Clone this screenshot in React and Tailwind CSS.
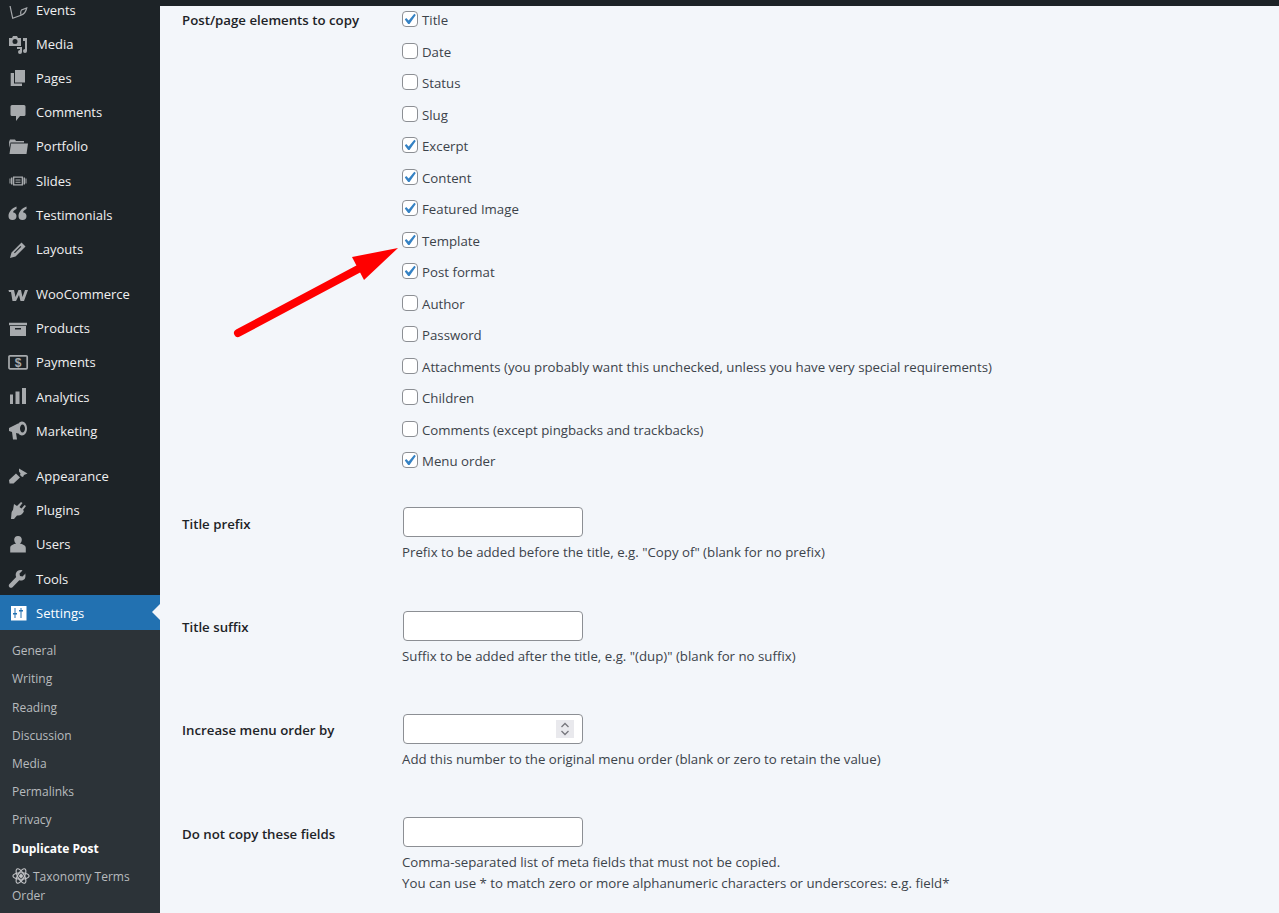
import React from 'react';

const fill = 'currentColor';

const icons = {
  events: (
    <path fill="none" stroke={fill} strokeWidth="1.200" d="M1 1L4.700 18.300L13.700 15C16 14 18 11 18.700 8L13.500 10C12.800 11 12.500 13 13 15" />
  ),
  media: (
    <path fill={fill} fillRule="evenodd" d="M1 3h3l1-2h4l1 2h3v8h-12zM7 4a2.500 2.500 0 1 0 0 5 2.500 2.500 0 0 0 0-5zM15 3h4v13a2 2 0 1 1-2-2v-8h-2zM9 12h5v5a2 2 0 1 1-2-2v-1h-3z" />
  ),
  pages: (
    <path fill={fill} d="M7 1h10v12.500h-10zM2.700 4h3.300v10.500h8v2.500h-11.300z" />
  ),
  comments: (
    <path fill={fill} d="M4 2h12a1.500 1.500 0 0 1 1.500 1.500v8a1.500 1.500 0 0 1-1.500 1.500h-4l-4 5v-5h-4a1.500 1.500 0 0 1-1.500-1.500v-8a1.500 1.500 0 0 1 1.500-1.500z" />
  ),
  portfolio: (
    <path fill={fill} d="M3 6.500h17l-1.500 10.500h-17zM1 5l1-2.500h5l1 1.500h8v1.500h-13.500l-1 5.500z" />
  ),
  slides: (
    <g fill={fill}>
      <path d="M1.500 7.500h1v5h-1zM3 6.500h1.500v7h-1.500zM15.500 6.500h1.500v7h-1.500zM17.500 7.500h1v5h-1z" />
      <path fillRule="evenodd" d="M5 5.500h10v9h-10zM6.300 6.800v6.400h7.400v-6.400zM7.500 8.500h5v1h-5zM7.500 10.800h5v1h-5z" />
    </g>
  ),
  quote: (
    <path fill={fill} d="M8.500 1.500C4 3 .5 7 .5 11a4 4 0 1 0 8 0c0-2-1.500-3.500-3.500-3.800C5.500 5.500 7 4.500 8.500 4zM18.500 1.500C14 3 10.500 7 10.500 11a4 4 0 1 0 8 0c0-2-1.500-3.500-3.500-3.800C15.500 5.500 17 4.500 18.500 4z" />
  ),
  pencil: (
    <path fill={fill} fillRule="evenodd" d="M13.500 2.500l4 4-10 10-5.500 1.500 1.500-5.500zM12.500 6l.8.8-6.500 6.500-.8-.8z" />
  ),
  woo: (
    <path fill={fill} d="M.5 5h5.500l1.500 7 3-7h2.500l1.500 7 2.500-7h3l-4 11h-3.500l-1.500-6-3 6h-3.500l-1.500-9h-2z" />
  ),
  products: (
    <path fill={fill} fillRule="evenodd" d="M1 3.700h18v2.500h-18zM2 7h16v10h-16zM7 9v1.500h6v-1.500z" />
  ),
  payments: (
    <g>
      <rect x="1" y="2.800" width="18.200" height="13" rx="1" fill="none" stroke={fill} strokeWidth="1.700" />
      <text x="10" y="13.500" textAnchor="middle" fontSize="12" fontWeight="700" fontFamily="Liberation Sans, sans-serif" fill={fill}>$</text>
    </g>
  ),
  analytics: (
    <path fill={fill} d="M2 7.500h3v9.500h-3zM7.500 4.500h4v12.500h-4zM14 1h4v16h-4z" />
  ),
  marketing: (
    <g fill={fill}>
      <path d="M1 6L10 1.500V11.500L8 11l1 6.500h-4l-1-7.500-3-1z" />
      <path fillRule="evenodd" d="M14 -.5c2.800 0 5 3.100 5 7s-2.200 7-5 7c-1.600 0-3-1-4-2.500v-9c1-1.500 2.400-2.500 4-2.500zM14.500 2.500c-1.400 0-2.500 1.800-2.500 4s1.100 4 2.500 4 2.500-1.800 2.500-4-1.100-4-2.500-4z" />
    </g>
  ),
  appearance: (
    <path fill={fill} d="M11 1.500l8.500 5-3.500 1.500-1 2-1.500-.5-1.500-1.500.5-1.500-1.500-2zM8 6.500l4 4-6.500 6h-4l-.5-3.500z" />
  ),
  plugins: (
    <path fill={fill} d="M13 1l1.500 1-3 4 2 1.500 3-3.500 1.500 1-3 4 1 1c-1 3-3.500 5-7 4.500l-3 3.500h-3l.5-6c.2-1 .5-2 1.500-3l1-6 3 2z" />
  ),
  users: (
    <path fill={fill} d="M10 1a3.800 3.800 0 0 1 3.800 3.800c0 2-1 3.200-2 3.800 2.500.6 6 1.600 6 4.400v4.500h-15.600v-4.500c0-2.800 3.500-3.800 6-4.400-1-.6-2-1.800-2-3.800a3.800 3.800 0 0 1 3.800-3.800z" />
  ),
  tools: (
    <path fill={fill} d="M17.500 4.500l-3 3-2.500-.5-.5-2.500 3-3c-2.500-1-5.500 0-6.500 2.500-.5 1.500-.3 3 .2 4l-6.700 7c-1 1-1 2.500 0 3.200.8.800 2 .8 3 0l6.800-7c2 .8 4.200.2 5.500-1.500.8-1.500 1-3.500.2-5.700z" />
  ),
};

function Icon({ name }) {
  return (
    <svg viewBox="0 0 20 20" className="h-5 w-5 shrink-0 overflow-visible text-[#a7aaad]">
      {icons[name]}
    </svg>
  );
}

const topMenu = [
  [
    ['events', 'Events'],
    ['media', 'Media'],
    ['pages', 'Pages'],
    ['comments', 'Comments'],
    ['portfolio', 'Portfolio'],
    ['slides', 'Slides'],
    ['quote', 'Testimonials'],
    ['pencil', 'Layouts'],
  ],
  [
    ['woo', 'WooCommerce'],
    ['products', 'Products'],
    ['payments', 'Payments'],
    ['analytics', 'Analytics'],
    ['marketing', 'Marketing'],
  ],
  [
    ['appearance', 'Appearance'],
    ['plugins', 'Plugins'],
    ['users', 'Users'],
    ['tools', 'Tools'],
  ],
];

const subMenu = ['General', 'Writing', 'Reading', 'Discussion', 'Media', 'Permalinks', 'Privacy'];

const elements = [
  ['Title', true],
  ['Date', false],
  ['Status', false],
  ['Slug', false],
  ['Excerpt', true],
  ['Content', true],
  ['Featured Image', true],
  ['Template', true],
  ['Post format', true],
  ['Author', false],
  ['Password', false],
  ['Attachments (you probably want this unchecked, unless you have very special requirements)', false],
  ['Children', false],
  ['Comments (except pingbacks and trackbacks)', false],
  ['Menu order', true],
];

function Sidebar() {
  return (
    <aside className="w-[160px] shrink-0 overflow-hidden bg-[#1d2327] text-[13px] text-[#f0f0f1]">
      <div className="-mt-[14px]">
        {topMenu.map((group, i) => (
          <ul key={i} className="mb-[11px]">
            {group.map(([icon, label]) => (
              <li key={label} className="flex h-[34.200px] items-center gap-[8px] pl-[8px] pt-[2.500px]">
                <Icon name={icon} />
                <span>{label}</span>
              </li>
            ))}
          </ul>
        ))}
      </div>
      <div className="relative -mt-[11px] flex h-[35px] items-center gap-[8px] bg-[#2271b1] pl-[8px] pt-[2px] text-white">
        <svg viewBox="0 0 20 20" className="h-5 w-5 shrink-0">
          <rect x="3" y="2" width="15.500" height="14.500" fill="#fff" />
          <path fill="#2271b1" d="M6.500 4h1v10h-1zM5 9h4v1.400h-4zM12.500 4h1v10h-1zM11 6h4v1.400h-4z" />
        </svg>
        <span>Settings</span>
        <span className="absolute right-0 top-[9px] h-0 w-0 border-y-[8px] border-r-[8px] border-y-transparent border-r-[#f3f6fa]" />
      </div>
      <ul className="bg-[#2c3338] pt-[7px] pb-4 text-[12px] text-[#b8bbbe]">
        {subMenu.map((label) => (
          <li key={label} className="flex h-[28.200px] items-center pl-[12px]">{label}</li>
        ))}
        <li className="flex h-[28.200px] items-center pl-[12px] font-bold text-white">Duplicate Post</li>
        <li className="pl-[12px] pt-[4px] leading-[19px]">
          <svg viewBox="0 0 20 20" className="mr-[3px] inline-block h-[18px] w-[18px] align-[-4px] text-[#c3c4c7]" fill="none" stroke="currentColor" strokeWidth="1.300">
            <ellipse cx="10" cy="10" rx="9" ry="3.600" />
            <ellipse cx="10" cy="10" rx="9" ry="3.600" transform="rotate(60 10 10)" />
            <ellipse cx="10" cy="10" rx="9" ry="3.600" transform="rotate(120 10 10)" />
            <circle cx="10" cy="10" r="1.500" fill="currentColor" />
          </svg>
          Taxonomy Terms Order
        </li>
      </ul>
    </aside>
  );
}

function Checkbox({ checked, label }) {
  return (
    <label className="flex h-4 items-center gap-[4px]">
      <span className="flex h-4 w-4 shrink-0 items-center justify-center rounded-[4px] border border-[#8c8f94] bg-white">
        {checked && (
          <svg viewBox="0 0 14 14" className="h-[14px] w-[14px]">
            <path fill="#3582c4" d="M11.300 1.800l1.500 1.100-6.300 9h-1.300l-3.400-4.500 1.400-1.300 2.500 2.300z" />
          </svg>
        )}
      </span>
      <span className="whitespace-nowrap pt-[4px]">{label}</span>
    </label>
  );
}

function Field({ label, children, description }) {
  return (
    <div className="flex h-[103.300px]">
      <div className="w-[221px] shrink-0 pt-[7.500px] font-semibold text-[#1d2327]">{label}</div>
      <div>
        {children}
        <div className="mt-[5px] -ml-px leading-[21px]">{description}</div>
      </div>
    </div>
  );
}

const inputClass = 'block h-[30px] w-[180px] rounded-[4px] border border-[#8c8f94] bg-white';

export default function App() {
  return (
    <div className="relative flex h-[913px] flex-col overflow-hidden bg-[#f3f6fa] font-['Open_Sans',sans-serif] text-[13.250px] text-[#3c434a]">
      <div className="h-[6px] shrink-0 bg-[#1d2327]" />
      <div className="flex min-h-0 flex-1">
        <Sidebar />
        <main className="flex-1 pl-[22px]">
          <div className="flex pt-[5px]">
            <div className="w-[220px] shrink-0 pt-px font-semibold leading-4 text-[#1d2327]">Post/page elements to copy</div>
            <div className="flex flex-col gap-[15.500px]">
              {elements.map(([label, checked]) => (
                <Checkbox key={label} label={label} checked={checked} />
              ))}
            </div>
          </div>
          <div className="mt-[39.400px]">
            <Field label="Title prefix" description={'Prefix to be added before the title, e.g. "Copy of" (blank for no prefix)'}>
              <input type="text" className={inputClass} />
            </Field>
            <Field label="Title suffix" description={'Suffix to be added after the title, e.g. "(dup)" (blank for no suffix)'}>
              <input type="text" className={inputClass} />
            </Field>
            <Field label="Increase menu order by" description="Add this number to the original menu order (blank or zero to retain the value)">
              <div className="relative">
                <input type="text" className={inputClass} />
                <span className="absolute left-[153px] top-[6px] flex h-[18px] w-[18px] items-center justify-center bg-[#e9e9ed]">
                  <svg viewBox="0 0 18 18" className="h-[18px] w-[18px]" fill="none" stroke="#77777d" strokeWidth="1.300">
                    <path d="M5.500 7l3.500-3.500 3.500 3.500M5.500 11l3.500 3.500 3.500-3.500" />
                  </svg>
                </span>
              </div>
            </Field>
            <Field
              label="Do not copy these fields"
              description={
                <>
                  Comma-separated list of meta fields that must not be copied.
                  <br />
                  You can use * to match zero or more alphanumeric characters or underscores: e.g. field*
                </>
              }
            >
              <input type="text" className={inputClass} />
            </Field>
          </div>
        </main>
      </div>
      <svg className="pointer-events-none absolute left-0 top-0" width="1279" height="913">
        <path d="M238 333L362 267" stroke="#ff0000" strokeWidth="8" strokeLinecap="round" fill="none" />
        <path d="M398 248L352 257L364 280Z" fill="#ff0000" />
      </svg>
    </div>
  );
}
